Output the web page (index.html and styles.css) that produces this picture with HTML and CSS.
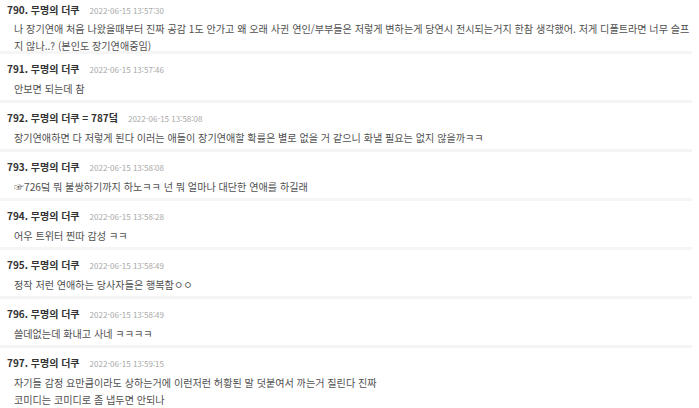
FILE: index.html
```html
<!DOCTYPE html>
<html lang="ko">
<head>
<meta charset="utf-8">
<link rel="stylesheet" href="styles.css">
</head>
<body>
<div class="list">
  <div class="item first">
    <div class="head"><span class="name">790. 무명의 더쿠</span><span class="date">2022-06-15 13:57:30</span></div>
    <div class="body">나 장기연애 처음 나왔을때부터 진짜 공감 1도 안가고 왜 오래 사귄 연인/부부들은 저렇게 변하는게 당연시 전시되는거지 한참 생각했어. 저게 디폴트라면 너무 슬프지 않나..? (본인도 장기연애중임)</div>
  </div>
  <div class="item">
    <div class="head"><span class="name">791. 무명의 더쿠</span><span class="date">2022-06-15 13:57:46</span></div>
    <div class="body">안보면 되는데 참</div>
  </div>
  <div class="item">
    <div class="head"><span class="name">792. 무명의 더쿠 = 787덬</span><span class="date">2022-06-15 13:58:08</span></div>
    <div class="body">장기연애하면 다 저렇게 된다 이러는 애들이 장기연애할 확률은 별로 없을 거 같으니 화낼 필요는 없지 않을까ㅋㅋ</div>
  </div>
  <div class="item">
    <div class="head"><span class="name">793. 무명의 더쿠</span><span class="date">2022-06-15 13:58:08</span></div>
    <div class="body">☞726덬 뭐 불쌍하기까지 하노ㅋㅋ 넌 뭐 얼마나 대단한 연애를 하길래</div>
  </div>
  <div class="item">
    <div class="head"><span class="name">794. 무명의 더쿠</span><span class="date">2022-06-15 13:58:28</span></div>
    <div class="body">어우 트위터 찐따 감성 ㅋㅋ</div>
  </div>
  <div class="item">
    <div class="head"><span class="name">795. 무명의 더쿠</span><span class="date">2022-06-15 13:58:49</span></div>
    <div class="body">정작 저런 연애하는 당사자들은 행복함ㅇㅇ</div>
  </div>
  <div class="item">
    <div class="head"><span class="name">796. 무명의 더쿠</span><span class="date">2022-06-15 13:58:49</span></div>
    <div class="body">쓸데없는데 화내고 사네 ㅋㅋㅋㅋ</div>
  </div>
  <div class="item last">
    <div class="head"><span class="name">797. 무명의 더쿠</span><span class="date">2022-06-15 13:59:15</span></div>
    <div class="body">자기들 감정 요만큼이라도 상하는거에 이런저런 허황된 말 덧붙여서 까는거 질린다 진짜<br>코미디는 코미디로 좀 냅두면 안되나</div>
  </div>
</div>
</body>
</html>
```

FILE: styles.css
```css
html, body {
  margin: 0;
  padding: 0;
  background: #ffffff;
}
body {
  font-family: "Noto Sans CJK KR", "Noto Sans", "Liberation Sans", sans-serif;
  color: #505050;
}
.list {
  width: 692px;
  display: flex;
  flex-direction: column;
}
.item {
  padding: 6px 0 3px 7px;
  border-bottom: 3px solid #f5f5f5;
}
.item.first {
  padding-top: 1px;
  padding-bottom: 0;
}
.item.first .body {
  margin-top: 2px;
  margin-bottom: -3px;
}
.item.last {
  border-bottom: none;
}
.head {
  display: flex;
  align-items: baseline;
  height: 17px;
  line-height: 17px;
}
.name {
  font-size: 10px;
  font-weight: bold;
  color: #333;
}
.date {
  font-size: 8px;
  color: #a8a8a8;
  margin-left: 10px;
}
.body {
  margin-top: 3px;
  padding-left: 7px;
  padding-right: 0;
  font-size: 10.1px;
  line-height: 17px;
  color: #505050;
}
```
